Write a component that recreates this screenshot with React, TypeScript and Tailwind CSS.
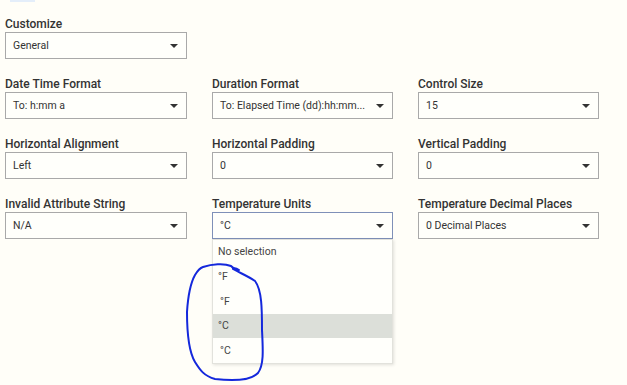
import React from "react";

const Caret = () => (
  <svg width="8" height="4" viewBox="0 0 8 4" className="shrink-0">
    <path d="M0 0 H8 L4 4 Z" fill="#333" />
  </svg>
);

function Field({
  label,
  value,
  active = false,
}: {
  label: string;
  value: string;
  active?: boolean;
}) {
  return (
    <div className="flex flex-col">
      <div className="h-4 leading-4 text-[12px] font-medium text-[#333]">{label}</div>
      <div
        className={`h-[27px] flex items-center justify-between pl-[7px] pr-[8px] border bg-[#fffffb] ${
          active ? "border-[#7f90b8]" : "border-[#a9a9a9]"
        }`}
      >
        <span className="text-[10.5px] text-[#333] whitespace-nowrap mr-2 pt-px">{value}</span>
        <Caret />
      </div>
    </div>
  );
}

export default function App() {
  const items = [
    { t: "No selection", pl: "pl-[5px]", hl: false },
    { t: "°F", pl: "pl-[5px]", hl: false },
    { t: "°F", pl: "pl-[7px]", hl: false },
    { t: "°C", pl: "pl-[5px]", hl: true },
    { t: "°C", pl: "pl-[7px]", hl: false },
  ];
  return (
    <div
      className="relative w-[627px] h-[385px] overflow-hidden bg-[#fffef8]"
      style={{ fontFamily: "Roboto, 'Liberation Sans', sans-serif" }}
    >
      <div className="absolute left-[10px] top-0 w-[25px] h-[2px] bg-[#e4eefa]" />
      <div className="pt-4 pl-[5px]">
        <div className="w-[182px]">
          <Field label="Customize" value="General" />
        </div>
        <div className="mt-[17px] grid grid-cols-[182px_181px_181px] gap-x-[25px] gap-y-[17px]">
          <Field label="Date Time Format" value="To: h:mm a" />
          <Field label="Duration Format" value="To: Elapsed Time (dd):hh:mm..." />
          <Field label="Control Size" value="15" />
          <Field label="Horizontal Alignment" value="Left" />
          <Field label="Horizontal Padding" value="0" />
          <Field label="Vertical Padding" value="0" />
          <Field label="Invalid Attribute String" value="N/A" />
          <div className="relative">
            <Field label="Temperature Units" value="°C" active />
            <div className="absolute left-0 top-[43px] w-full bg-[#fffffb] border border-[#e2e2dc] shadow-[1px_1px_3px_rgba(0,0,0,0.12)] z-10">
              {items.map((it, i) => (
                <div
                  key={i}
                  className={`h-[24.6px] flex items-center ${it.pl} text-[10.5px] text-[#444] ${
                    it.hl ? "bg-[#dcdfd9]" : ""
                  }`}
                >
                  {it.t}
                </div>
              ))}
            </div>
          </div>
          <Field label="Temperature Decimal Places" value="0 Decimal Places" />
        </div>
      </div>
      <svg
        className="absolute left-0 top-0 z-20 pointer-events-none"
        width="627"
        height="385"
        viewBox="0 0 627 385"
      >
        <path
          d="M203 267 C212 264 224 263 231 266 C233 268 236 270 239 270 C236 268 234 268 233 269 C240 273 248 276 255 281 C262 290 262 310 262 330 C263 350 264 365 258 373 C250 381 232 381 215 379 C204 376 200 370 195 362 C189 352 187 332 187 312 C188 296 190 284 195 275 C198 270 200 268 203 267 Z"
          fill="none"
          stroke="#1428dc"
          strokeWidth="2"
          strokeLinejoin="round"
        />
      </svg>
    </div>
  );
}
